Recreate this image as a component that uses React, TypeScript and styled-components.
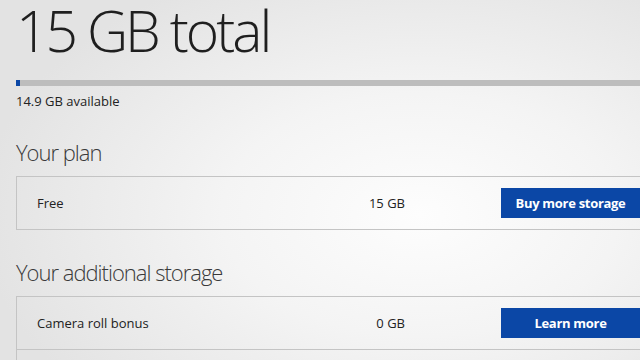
import React from "react";
import styled, { createGlobalStyle } from "styled-components";

interface StorageRow {
  label: string;
  amount: string;
  action: string;
}

const plan: StorageRow[] = [{ label: "Free", amount: "15 GB", action: "Buy more storage" }];

const additional: StorageRow[] = [
  { label: "Camera roll bonus", amount: "0 GB", action: "Learn more" },
];

const TOTAL_GB = 15;
const USED_GB = 0.1;

export default function App() {
  const usedPercent = Math.max((USED_GB / TOTAL_GB) * 100, 0.6);

  return (
    <>
      <GlobalStyle />
      <Page>
        <Total>15 GB total</Total>
        <Track>
          <Fill style={{ width: `${usedPercent}%` }} />
        </Track>
        <Available>14.9 GB available</Available>

        <SectionTitle>Your plan</SectionTitle>
        <Box>
          {plan.map((row) => (
            <Row key={row.label}>
              <Label>{row.label}</Label>
              <Amount>{row.amount}</Amount>
              <ActionButton>{row.action}</ActionButton>
            </Row>
          ))}
        </Box>

        <SectionTitle>Your additional storage</SectionTitle>
        <Box $continues>
          {additional.map((row) => (
            <Row key={row.label}>
              <Label>{row.label}</Label>
              <Amount>{row.amount}</Amount>
              <ActionButton>{row.action}</ActionButton>
            </Row>
          ))}
        </Box>
      </Page>
    </>
  );
}

const GlobalStyle = createGlobalStyle`
  html, body {
    margin: 0;
    padding: 0;
    width: 640px;
    height: 360px;
    overflow: hidden;
  }
  body {
    font-family: "Open Sans", "Liberation Sans", sans-serif;
    color: #222;
    background: radial-gradient(
      ellipse 440px 270px at 420px 215px,
      #fdfdfd 0%,
      #f4f4f4 45%,
      #e3e3e3 100%
    );
    background-color: #e3e3e3;
  }
`;

const Page = styled.div`
  width: 640px;
  height: 360px;
  padding-left: 16px;
  box-sizing: border-box;
  overflow: hidden;
`;

const Total = styled.h1`
  margin: 0;
  font-size: 57px;
  font-weight: 300;
  line-height: 60px;
  letter-spacing: -3px;
  color: #1f1f1f;
  white-space: nowrap;
`;

const Track = styled.div`
  margin-top: 20px;
  height: 6px;
  width: 624px;
  background: #bdbdbd;
`;

const Fill = styled.div`
  height: 100%;
  background: #0b47a6;
`;

const Available = styled.div`
  margin-top: 6px;
  font-size: 13px;
  line-height: 18px;
  color: #222;
`;

const SectionTitle = styled.h2`
  margin: 27px 0 9px;
  font-size: 22px;
  font-weight: 300;
  line-height: 30px;
  letter-spacing: -1px;
  color: #3a3a3a;
  white-space: nowrap;
`;

const Box = styled.div<{ $continues?: boolean }>`
  width: 645px;
  box-sizing: border-box;
  border-top: 1px solid #c4c4c4;
  border-left: 1px solid #c4c4c4;
  padding-bottom: ${(p) => (p.$continues ? "40px" : "0")};
`;

const Row = styled.div`
  display: flex;
  align-items: center;
  height: 53px;
  padding: 0 21px 0 20px;
  box-sizing: border-box;
  border-bottom: 1px solid #c4c4c4;
`;

const Label = styled.div`
  flex: 1;
  font-size: 13px;
  color: #222;
`;

const Amount = styled.div`
  width: 80px;
  text-align: right;
  font-size: 13px;
  color: #222;
`;

const ActionButton = styled.button`
  margin-left: 96px;
  width: 139px;
  height: 30px;
  border: none;
  padding: 0;
  background: #0b47a6;
  color: #fff;
  font-family: "Open Sans", "Liberation Sans", sans-serif;
  font-size: 13px;
  font-weight: 700;
  letter-spacing: -0.3px;
  cursor: pointer;
`;
